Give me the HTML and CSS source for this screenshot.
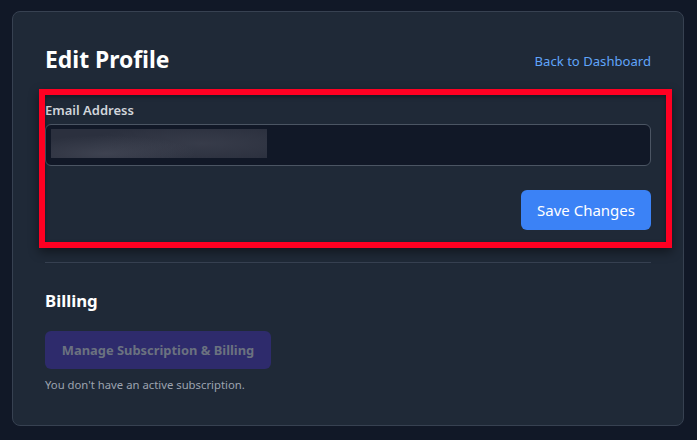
FILE: index.html
```html
<!DOCTYPE html>
<html lang="en">
<head>
<meta charset="utf-8">
<title>Edit Profile</title>
<link rel="stylesheet" href="styles.css">
</head>
<body>
<div class="page">
  <div class="card">
    <div class="header">
      <h1 class="title">Edit Profile</h1>
      <a class="back" href="#">Back to Dashboard</a>
    </div>
    <form class="form">
      <label class="label">Email Address</label>
      <div class="input"><div class="redact"></div></div>
      <div class="actions">
        <button type="button" class="btn-save">Save Changes</button>
      </div>
    </form>
    <div class="billing">
      <h2 class="subtitle">Billing</h2>
      <button type="button" class="btn-manage">Manage Subscription &amp; Billing</button>
      <p class="note">You don't have an active subscription.</p>
    </div>
    <div class="highlight"></div>
  </div>
</div>
</body>
</html>
```

FILE: styles.css
```css
* { box-sizing: border-box; }
html, body { margin: 0; padding: 0; }
body {
  background: #111827;
  font-family: "Noto Sans", "Open Sans", sans-serif;
  width: 697px;
  height: 440px;
  overflow: hidden;
}
.page {
  padding: 11px 13px 0 12px;
}
.card {
  position: relative;
  background: #1f2937;
  border: 1px solid #374151;
  border-radius: 8px;
  padding: 32px 32px 32px 32px;
  width: 672px;
}
.header {
  display: flex;
  justify-content: space-between;
  align-items: center;
  height: 32px;
}
.title {
  margin: 0;
  font-size: 22.9px;
  line-height: 32px;
  font-weight: 700;
  color: #ffffff;
}
.back {
  color: #60a5fa;
  font-size: 13.1px;
  line-height: 20px;
  text-decoration: none;
  margin-top: 2px;
}
.form {
  margin: 24px 0 0 0;
  display: flex;
  flex-direction: column;
}
.label {
  font-size: 13px;
  line-height: 20px;
  font-weight: 600;
  color: #d1d5db;
  margin-bottom: 4px;
}
.input {
  height: 42px;
  background: #111827;
  border: 1px solid #4b5563;
  border-radius: 6px;
  padding: 4px 5px;
  display: flex;
}
.redact {
  width: 216px;
  height: 29px;
  background:
    radial-gradient(ellipse 60% 90% at 25% 85%, rgba(78,82,96,0.55), rgba(78,82,96,0) 70%),
    radial-gradient(ellipse 70% 90% at 70% 50%, rgba(70,74,88,0.45), rgba(70,74,88,0) 75%),
    #2b303e;
}
.actions {
  display: flex;
  justify-content: flex-end;
  margin-top: 24px;
}
.btn-save {
  background: #3b82f6;
  color: #ffffff;
  border: none;
  border-radius: 6px;
  font-family: inherit;
  font-size: 15px;
  line-height: 24px;
  padding: 0;
  white-space: nowrap;
  width: 130px;
  height: 40px;
}
.billing {
  margin-top: 32px;
  border-top: 1px solid #374151;
  padding-top: 24px;
  display: flex;
  flex-direction: column;
  align-items: flex-start;
}
.subtitle {
  margin: 0 0 16px 0;
  font-size: 16.8px;
  line-height: 28px;
  font-weight: 700;
  color: #ffffff;
}
.btn-manage {
  background: #2e2b6c;
  color: #6b7280;
  border: none;
  border-radius: 6px;
  font-family: inherit;
  font-size: 12.9px;
  font-weight: 700;
  line-height: 20px;
  height: 38px;
  width: 226px;
  padding: 0;
  white-space: nowrap;
}
.note {
  margin: 8px 0 0 0;
  font-size: 11.3px;
  line-height: 16px;
  color: #9ca3af;
}
.highlight {
  position: absolute;
  left: 26px;
  top: 77px;
  width: 633px;
  height: 159px;
  border: 6px solid #ff0022;
  box-shadow: 0 4px 10px rgba(0,0,0,0.45), inset 0 2px 4px rgba(0,0,0,0.35);
  pointer-events: none;
}
```
